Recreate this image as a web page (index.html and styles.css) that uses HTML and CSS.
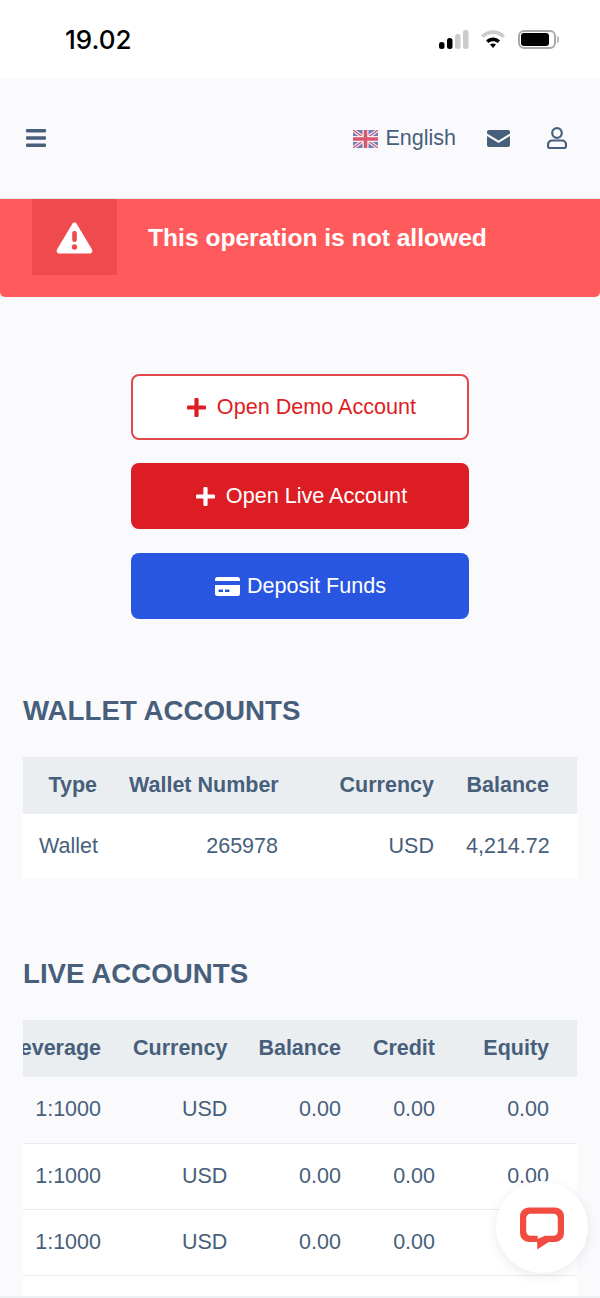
FILE: index.html
```html
<!DOCTYPE html>
<html lang="en">
<head>
  <meta charset="UTF-8">
  <title>Accounts</title>
  <link rel="stylesheet" href="styles.css">
</head>
<body>
<div class="statusbar">
  <span class="clock">19.02</span>
  <div class="status-icons">
    <svg class="signal" width="30" height="19" viewBox="0 0 30 19">
      <rect x="0" y="12" width="5.500" height="7" rx="2.500" fill="#000"/>
      <rect x="8" y="8" width="5.500" height="11" rx="2.500" fill="#000"/>
      <rect x="16" y="4" width="5.500" height="15" rx="2.500" fill="#ccc"/>
      <rect x="24" y="0" width="5.500" height="19" rx="2.500" fill="#ccc"/>
    </svg>
    <svg class="wifi" width="26" height="20" viewBox="0 0 26 20">
      <path d="M1 6.500C8 -0.500 18 -0.500 25 6.500L22.500 9C17 3.500 9 3.500 3.500 9Z" fill="#ccc"/>
      <path d="M6 11.500C10 7.500 16 7.500 20 11.500L17.500 14C15 11.500 11 11.500 8.500 14Z" fill="#000"/>
      <path d="M10 15.500C11.800 14 14.200 14 16 15.500L13 19Z" fill="#000"/>
    </svg>
    <div class="battery"><span></span></div>
  </div>
</div>

<header class="topnav">
  <svg class="burger" width="20" height="18" viewBox="0 0 20 18">
    <rect x="0" y="0" width="20" height="3.500" rx="1"/>
    <rect x="0" y="7.200" width="20" height="3.500" rx="1"/>
    <rect x="0" y="14.500" width="20" height="3.500" rx="1"/>
  </svg>
  <div class="nav-right">
    <div class="lang">
      <svg class="flag" width="25" height="18" viewBox="0 0 25 18">
        <rect width="25" height="18" fill="#6f7db8"/>
        <path d="M0 0L25 18M25 0L0 18" stroke="#f2e4e8" stroke-width="3.500"/>
        <path d="M0 0L25 18M25 0L0 18" stroke="#c9587a" stroke-width="1.200"/>
        <path d="M12.500 0V18M0 9H25" stroke="#f7eef0" stroke-width="6"/>
        <path d="M12.500 0V18M0 9H25" stroke="#d9576f" stroke-width="3.500"/>
      </svg>
      <span>English</span>
    </div>
    <svg class="mail" width="23" height="17" viewBox="0 0 23 17">
      <path d="M2 0H21A2 2 0 0 1 23 2V3.500L11.500 10.500L0 3.500V2A2 2 0 0 1 2 0Z"/>
      <path d="M0 6L11.500 13L23 6V15A2 2 0 0 1 21 17H2A2 2 0 0 1 0 15Z"/>
    </svg>
    <svg class="user" width="20" height="22" viewBox="0 0 20 22">
      <circle cx="10" cy="6" r="4.800"/>
      <path d="M5 13.500H15A4 4 0 0 1 19 17.500V19A2 2 0 0 1 17 21H3A2 2 0 0 1 1 19V17.500A4 4 0 0 1 5 13.500Z"/>
    </svg>
  </div>
</header>

<div class="alert">
  <div class="alert-icon">
    <svg width="37" height="33" viewBox="0 0 37 33">
      <path d="M18.500 1.500C19.500 1.500 20.300 2 20.800 2.900L36 28.500C37 30.300 35.800 32.500 33.700 32.500H3.300C1.200 32.500 0 30.300 1 28.500L16.200 2.900C16.700 2 17.500 1.500 18.500 1.500Z" fill="#fff"/>
      <rect x="16.200" y="10" width="4.600" height="11" rx="2" fill="#ef4a4e"/>
      <circle cx="18.500" cy="26" r="2.700" fill="#ef4a4e"/>
    </svg>
  </div>
  <div class="alert-text">This operation is not allowed</div>
</div>

<div class="actions">
  <a class="btn btn-demo">
    <svg width="19" height="19" viewBox="0 0 19 19"><path d="M7.400 1.200A1.200 1.200 0 0 1 8.600 0H10.400A1.200 1.200 0 0 1 11.600 1.200V7.400H17.800A1.200 1.200 0 0 1 19 8.600V10.400A1.200 1.200 0 0 1 17.800 11.600H11.600V17.800A1.200 1.200 0 0 1 10.400 19H8.600A1.200 1.200 0 0 1 7.400 17.800V11.600H1.200A1.200 1.200 0 0 1 0 10.400V8.600A1.200 1.200 0 0 1 1.200 7.400H7.400Z"/></svg>
    Open Demo Account
  </a>
  <a class="btn btn-live">
    <svg width="19" height="19" viewBox="0 0 19 19"><path d="M7.400 1.200A1.200 1.200 0 0 1 8.600 0H10.400A1.200 1.200 0 0 1 11.600 1.200V7.400H17.800A1.200 1.200 0 0 1 19 8.600V10.400A1.200 1.200 0 0 1 17.800 11.600H11.600V17.800A1.200 1.200 0 0 1 10.400 19H8.600A1.200 1.200 0 0 1 7.400 17.800V11.600H1.200A1.200 1.200 0 0 1 0 10.400V8.600A1.200 1.200 0 0 1 1.200 7.400H7.400Z"/></svg>
    Open Live Account
  </a>
  <a class="btn btn-deposit">
    <svg width="25" height="19" viewBox="0 0 25 19">
      <path d="M2.500 0H22.500A2.500 2.500 0 0 1 25 2.500V4H0V2.500A2.500 2.500 0 0 1 2.500 0Z"/>
      <path fill-rule="evenodd" d="M0 8H25V16.500A2.500 2.500 0 0 1 22.500 19H2.500A2.500 2.500 0 0 1 0 16.500ZM3.500 12.500V15H8V12.500ZM10 12.500V15H14.500V12.500Z"/>
    </svg>
    Deposit Funds
  </a>
</div>

<section class="accounts wallet">
  <h2>WALLET ACCOUNTS</h2>
  <div class="table-wrap">
    <table>
      <thead>
        <tr>
          <th class="col-type">Type</th>
          <th class="col-number">Wallet Number</th>
          <th class="col-cur">Currency</th>
          <th>Balance</th>
        </tr>
      </thead>
      <tbody>
        <tr class="white">
          <td>Wallet</td>
          <td>265978</td>
          <td>USD</td>
          <td>4,214.72</td>
        </tr>
      </tbody>
    </table>
  </div>
</section>

<section class="accounts live">
  <h2>LIVE ACCOUNTS</h2>
  <div class="table-wrap">
    <table>
      <thead>
        <tr>
          <th>Leverage</th>
          <th>Currency</th>
          <th class="col-balance">Balance</th>
          <th>Credit</th>
          <th class="col-equity">Equity</th>
        </tr>
      </thead>
      <tbody>
        <tr>
          <td>1:1000</td><td>USD</td><td class="col-balance">0.00</td><td>0.00</td><td>0.00</td>
        </tr>
        <tr class="white">
          <td>1:1000</td><td>USD</td><td class="col-balance">0.00</td><td>0.00</td><td>0.00</td>
        </tr>
        <tr class="white">
          <td>1:1000</td><td>USD</td><td class="col-balance">0.00</td><td>0.00</td><td>0.00</td>
        </tr>
        <tr class="white">
          <td>1:1000</td><td>USD</td><td class="col-balance">0.00</td><td>0.00</td><td>0.00</td>
        </tr>
      </tbody>
    </table>
  </div>
</section>

<div class="chat">
  <svg width="46" height="44" viewBox="0 0 46 44">
    <path fill-rule="evenodd" d="M9 0H37A9 9 0 0 1 46 9V27A9 9 0 0 1 37 36H30L18 44V36H9A9 9 0 0 1 0 27V9A9 9 0 0 1 9 0ZM11 6.500A4.500 4.500 0 0 0 6.500 11V25A4.500 4.500 0 0 0 11 29.500H18.500V33L26 29.500H35A4.500 4.500 0 0 0 39.500 25V11A4.500 4.500 0 0 0 35 6.500Z" fill="#f24c41"/>
  </svg>
</div>
</body>
</html>
```

FILE: styles.css
```css
* {
  box-sizing: border-box;
}
html, body {
  height: 100%;
  overflow: hidden;
}
body {
  margin: 0;
  background: #fafafd;
  font-family: "Liberation Sans", Arial, sans-serif;
  font-size: 21.5px;
  color: #475f7b;
  border-bottom: 2px solid #eeeff1;
}

/* phone status bar */
.statusbar {
  height: 78px;
  background: #fff;
  display: flex;
  justify-content: space-between;
  align-items: center;
  padding: 0 44px 0 65px;
}
.clock {
  font-family: Inter, "Liberation Sans", sans-serif;
  font-size: 26px;
  font-weight: 500;
  color: #000;
}
.status-icons {
  display: flex;
  align-items: center;
  gap: 12px;
}
.signal {
  margin-right: -1px;
}
.battery {
  width: 38px;
  height: 19px;
  border: 2px solid #a9a9a9;
  border-radius: 6px;
  padding: 1px;
  position: relative;
}
.battery span {
  display: block;
  width: 28px;
  height: 13px;
  background: #000;
  border-radius: 3px;
}
.battery::after {
  content: '';
  position: absolute;
  right: -5px;
  top: 4px;
  width: 2px;
  height: 7px;
  background: #bbb;
  border-radius: 0 2px 2px 0;
}

/* nav */
.topnav {
  height: 121px;
  display: flex;
  justify-content: space-between;
  align-items: center;
  padding: 0 33px 0 26px;
  border-bottom: 1px solid #e4e5e8;
}
.burger, .mail {
  fill: #475f7b;
}
.nav-right {
  display: flex;
  align-items: center;
}
.lang {
  display: flex;
  align-items: center;
  gap: 7px;
  margin-right: 31px;
  padding-top: 1px;
}
.user {
  fill: none;
  stroke: #475f7b;
  stroke-width: 2.200;
  margin-left: 37px;
}

/* alert */
.alert {
  height: 98px;
  background: #ff5b5c;
  border-radius: 0 0 5px 5px;
  display: flex;
  align-items: flex-start;
  padding-left: 32px;
  color: #fff;
}
.alert-icon {
  width: 85px;
  height: 76px;
  background: #ef4a4e;
  display: flex;
  align-items: center;
  justify-content: center;
}
.alert-text {
  margin: 25px 0 0 31px;
  font-size: 24.6px;
  line-height: 28px;
  font-weight: 700;
}

/* buttons */
.actions {
  display: flex;
  flex-direction: column;
  align-items: center;
  gap: 23px;
  margin-top: 77px;
}
.btn {
  width: 338px;
  height: 66px;
  border-radius: 8px;
  display: flex;
  align-items: center;
  justify-content: center;
  gap: 11px;
  padding-left: 3px;
  font-size: 21.6px;
}
.btn svg {
  fill: currentColor;
}
.btn-demo {
  background: #fff;
  color: #dc1e24;
  border: 2px solid #e2474b;
}
.btn-live {
  background: #dc1e24;
  color: #fff;
}
.btn-deposit {
  background: #2856e0;
  color: #fff;
  gap: 7px;
  padding-left: 1px;
  margin-top: 1px;
}

/* tables */
.accounts {
  padding: 0 23px;
}
.accounts h2 {
  margin: 0;
  font-size: 27.7px;
  line-height: 32px;
  font-weight: 700;
}
.wallet {
  margin-top: 76px;
}
.live {
  margin-top: 79px;
}
.table-wrap {
  margin-top: 30px;
  display: flex;
  justify-content: flex-end;
  overflow: hidden;
}
table {
  border-collapse: collapse;
  flex: none;
}
th, td {
  text-align: right;
  padding: 0 16px;
  white-space: nowrap;
}
th:last-child, td:last-child {
  padding-right: 28px;
}
th {
  height: 57px;
  background: #ebeef1;
  font-weight: 700;
}
td {
  height: 66px;
  border-bottom: 1px solid #e9edf1;
}
.white td {
  background: #fff;
}
.wallet table {
  width: 554px;
  table-layout: fixed;
}
.wallet td {
  height: 65px;
  border-bottom: 0;
}
.col-type {
  width: 90px;
}
.col-number {
  width: 181px;
}
.col-cur {
  width: 156px;
}
.col-equity {
  width: 126px;
}
.live .col-balance {
  padding-left: 15px;
}

/* live chat bubble */
.chat {
  position: fixed;
  left: 496px;
  top: 1181px;
  width: 92px;
  height: 92px;
  border-radius: 50%;
  background: #fff;
  box-shadow: 0 3px 12px rgba(70, 80, 100, 0.12);
  display: flex;
  align-items: center;
  justify-content: center;
}
.chat svg {
  margin-top: 2px;
  width: 44px;
  height: 43px;
}
```
